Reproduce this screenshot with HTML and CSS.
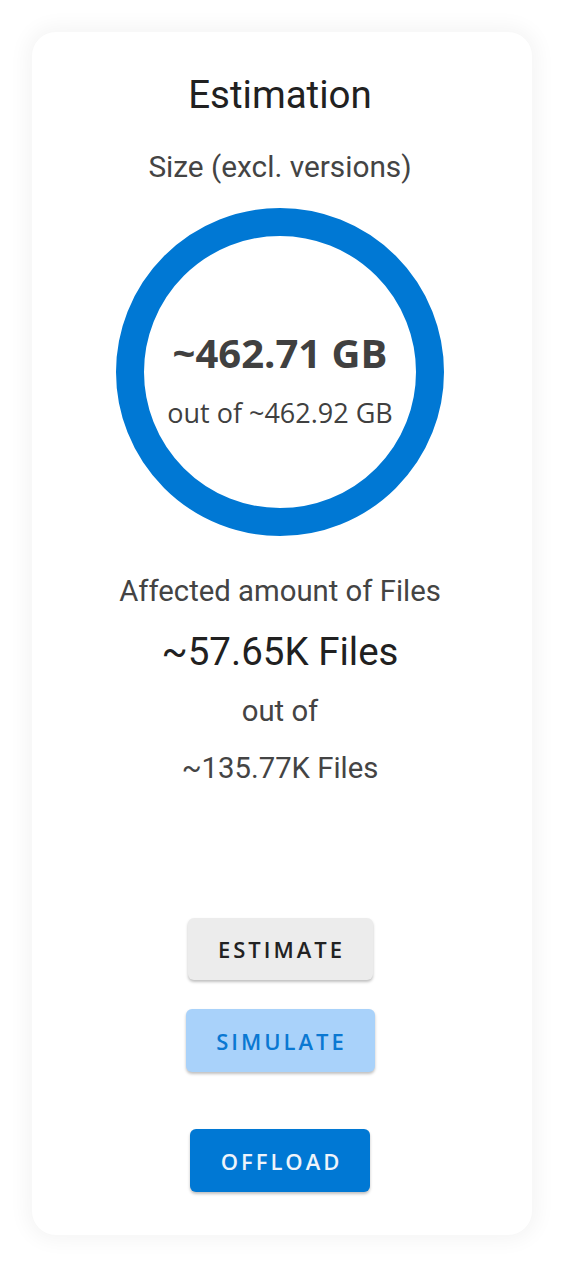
FILE: index.html
```html
<!DOCTYPE html>
<html>
<head>
<meta charset="utf-8">
<link rel="stylesheet" href="styles.css">
</head>
<body>
<div class="card">
  <h1 class="title">Estimation</h1>
  <div class="subtitle">Size (excl. versions)</div>
  <div class="ring">
    <div class="ring-value">~462.71 GB</div>
    <div class="ring-total">out of ~462.92 GB</div>
  </div>
  <div class="label affected">Affected amount of Files</div>
  <div class="files">~57.65K Files</div>
  <div class="label outof">out of</div>
  <div class="label total">~135.77K Files</div>
  <div class="actions">
    <button class="btn btn-estimate">ESTIMATE</button>
    <button class="btn btn-simulate">SIMULATE</button>
    <button class="btn btn-offload">OFFLOAD</button>
  </div>
</div>
</body>
</html>
```
FILE: styles.css
```css
html, body {
  margin: 0;
  padding: 0;
  background: #ffffff;
}
body {
  padding: 32px 43px 43px 32px;
  font-family: Roboto, "Liberation Sans", sans-serif;
}
.card {
  width: 500px;
  height: 1203px;
  box-sizing: border-box;
  background: #fff;
  border-radius: 24px;
  box-shadow: 0 0 20px 6px rgba(0,0,0,0.045);
  display: flex;
  flex-direction: column;
  align-items: center;
  padding: 40px 4px 0 0;
}
.title {
  margin: 0;
  font-weight: 400;
  font-size: 38.5px;
  line-height: 46px;
  color: #212121;
}
.subtitle {
  margin-top: 32px;
  font-size: 29.8px;
  line-height: 34px;
  color: #444;
}
.ring {
  margin-top: 24px;
  width: 328px;
  height: 328px;
  box-sizing: border-box;
  border: 28px solid #0078d4;
  border-radius: 50%;
  display: flex;
  flex-direction: column;
  align-items: center;
  justify-content: center;
  font-family: "Open Sans", "Noto Sans", sans-serif;
  color: #404040;
}
.ring-value {
  font-size: 40px;
  font-weight: 700;
  line-height: 48px;
  margin-top: 15px;
}
.ring-total {
  margin-top: 19px;
  font-size: 27px;
  line-height: 34px;
}
.label {
  font-size: 29.3px;
  line-height: 34px;
  color: #444;
}
.affected {
  margin-top: 38px;
}
.files {
  margin-top: 21px;
  font-size: 38.5px;
  line-height: 46px;
  color: #212121;
}
.outof {
  margin-top: 19px;
}
.total {
  margin-top: 23px;
}
.actions {
  margin-top: 133px;
  display: flex;
  flex-direction: column;
  align-items: center;
}
.btn {
  border: none;
  border-radius: 6px;
  font-family: "Open Sans", "Noto Sans", sans-serif;
  font-size: 22px;
  font-weight: 600;
  letter-spacing: 3px;
  padding: 0 0 0 3px;
  box-shadow: 0 2px 3px rgba(0,0,0,0.25);
  height: 63px;
}
.btn-estimate {
  width: 185px;
  height: 62px;
  background: #ececec;
  color: #222;
}
.btn-simulate {
  margin-top: 29px;
  width: 189px;
  background: #a9d2fa;
  color: #0a78d2;
}
.btn-offload {
  margin-top: 57px;
  width: 180px;
  background: #0078d4;
  color: #eef4fb;
}
```
